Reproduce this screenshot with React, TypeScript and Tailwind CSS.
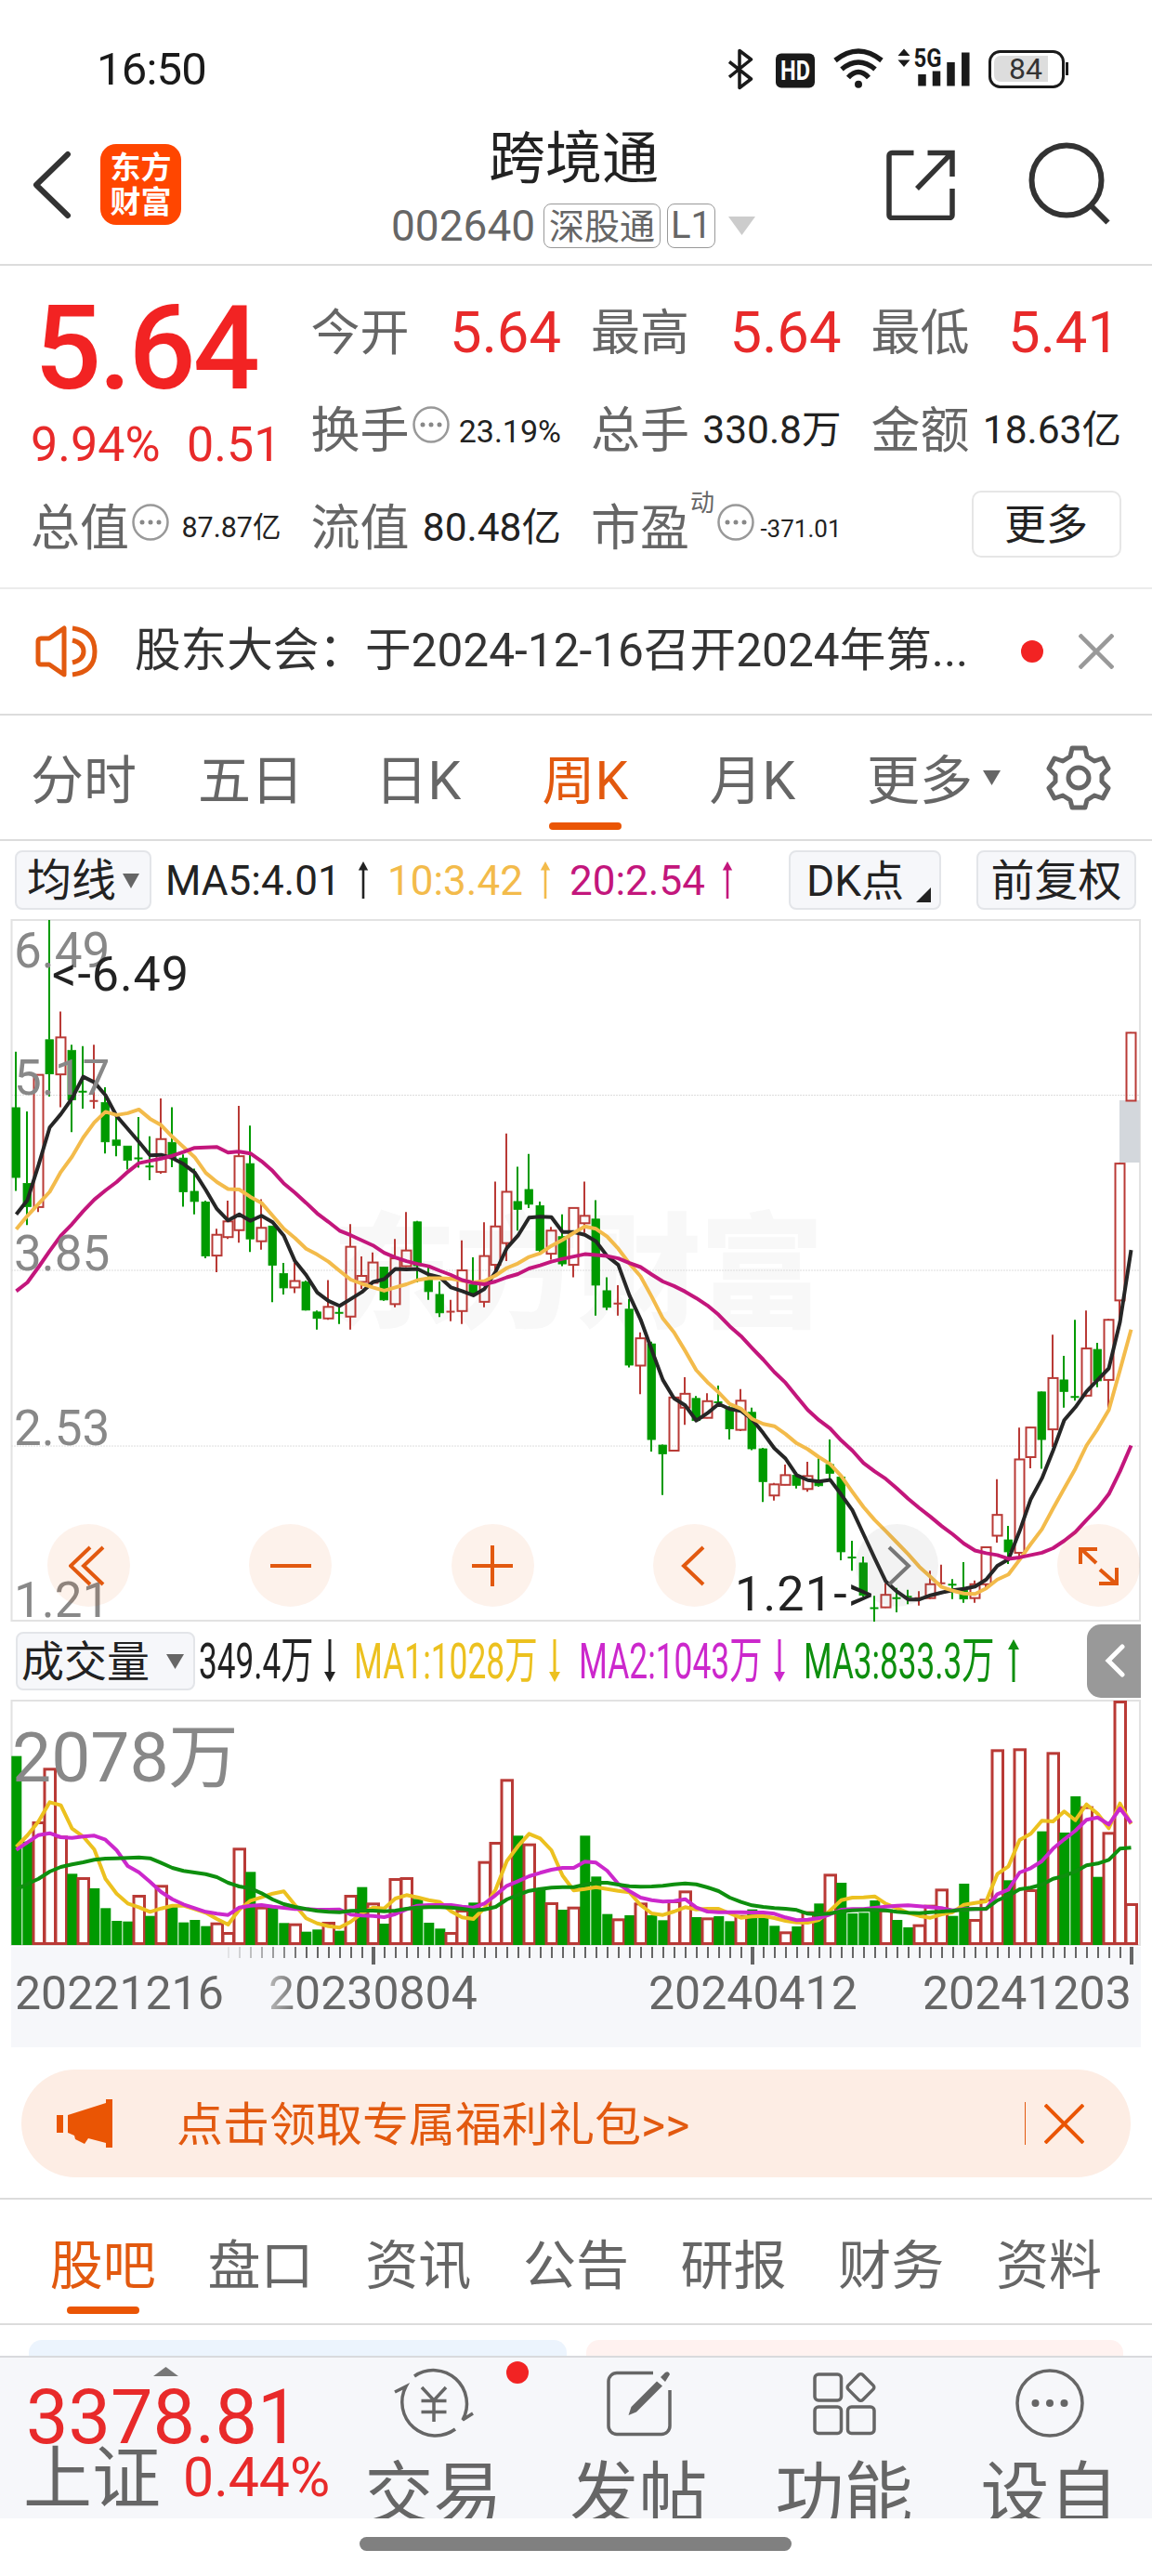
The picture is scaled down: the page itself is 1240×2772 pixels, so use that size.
import { FC, ReactNode } from "react";

type Candle = [up: 0 | 1, high: number, top: number, bottom: number, low: number];

const RED = "#b93a36";
const GREEN = "#009a00";
const STEP = 12;
const FIRST_X = 17;

// candle and price average values, in half pixel units
const candles: Candle[] = [
  [0, 305, 426, 577, 606], [0, 434, 590, 640, 680], [1, 355, 355, 641, 652], [0, 20, 279, 353, 402],
  [1, 218, 274, 354, 425], [0, 290, 302, 409, 479], [0, 293, 389, 394, 428], [1, 290, 409, 414, 428],
  [0, 382, 415, 500, 525], [0, 446, 496, 508, 531], [0, 509, 509, 540, 560], [0, 446, 533, 538, 556],
  [0, 488, 552, 555, 583], [1, 406, 494, 565, 569], [0, 425, 501, 535, 555], [0, 527, 535, 608, 640],
  [0, 558, 607, 629, 657], [0, 627, 630, 747, 752], [1, 688, 701, 746, 782], [1, 627, 672, 706, 710],
  [1, 422, 531, 691, 718], [0, 465, 547, 710, 738], [1, 624, 686, 715, 733], [0, 682, 682, 767, 847],
  [0, 762, 785, 816, 830], [1, 762, 801, 815, 827], [0, 800, 803, 864, 865], [0, 865, 868, 882, 906],
  [1, 799, 857, 882, 885], [0, 858, 868, 872, 894], [1, 678, 727, 878, 906], [1, 748, 790, 803, 818],
  [1, 739, 761, 805, 808], [0, 770, 771, 842, 844], [1, 710, 752, 851, 858], [1, 652, 735, 769, 771],
  [0, 671, 673, 768, 804], [0, 767, 796, 824, 842], [0, 802, 830, 870, 879], [1, 842, 864, 871, 888],
  [1, 713, 778, 866, 894], [0, 750, 809, 829, 833], [1, 674, 747, 846, 858], [1, 586, 683, 766, 785],
  [1, 482, 608, 719, 758], [0, 554, 629, 646, 692], [0, 526, 603, 635, 643], [0, 629, 638, 735, 738],
  [1, 684, 692, 742, 755], [0, 657, 705, 764, 769], [1, 642, 643, 766, 793], [1, 586, 660, 676, 697],
  [0, 626, 667, 810, 876], [0, 793, 822, 858, 864], [1, 810, 847, 853, 876], [0, 840, 862, 983, 988],
  [1, 912, 925, 984, 1046], [0, 932, 937, 1144, 1170], [0, 1155, 1156, 1175, 1264], [1, 1050, 1053, 1168, 1168],
  [1, 1009, 1045, 1075, 1112], [0, 1050, 1055, 1103, 1105], [1, 1044, 1061, 1097, 1098], [0, 1027, 1060, 1067, 1070],
  [0, 1072, 1075, 1121, 1144], [1, 1035, 1060, 1123, 1126], [0, 1075, 1085, 1164, 1167], [0, 1162, 1164, 1235, 1279],
  [1, 1238, 1241, 1265, 1276], [1, 1198, 1221, 1242, 1243], [0, 1215, 1221, 1243, 1250], [1, 1192, 1223, 1251, 1257],
  [0, 1183, 1236, 1244, 1246], [0, 1144, 1198, 1217, 1230], [0, 1220, 1225, 1387, 1405], [0, 1363, 1397, 1401, 1428],
  [0, 1397, 1411, 1481, 1484], [0, 1482, 1507, 1510, 1538], [1, 1455, 1480, 1507, 1508], [0, 1465, 1485, 1489, 1518],
  [0, 1469, 1482, 1486, 1500], [1, 1472, 1485, 1489, 1503], [1, 1428, 1457, 1487, 1489], [1, 1415, 1452, 1458, 1465],
  [0, 1446, 1456, 1460, 1489], [0, 1409, 1470, 1489, 1497], [1, 1449, 1457, 1487, 1497], [1, 1376, 1377, 1457, 1467],
  [1, 1230, 1307, 1352, 1367], [0, 1331, 1361, 1387, 1413], [1, 1118, 1187, 1389, 1397], [1, 1117, 1118, 1182, 1206],
  [0, 1040, 1041, 1144, 1207], [1, 917, 1011, 1122, 1160], [0, 963, 1015, 1040, 1075], [0, 885, 1050, 1054, 1060],
  [1, 865, 947, 1049, 1052], [0, 935, 949, 1017, 1031], [1, 883, 885, 1015, 1080], [1, 545, 547, 843, 888],
  [1, 263, 264, 411, 411],
];

const ma5 = [
  657, 626, 550, 469, 440, 406, 359, 371, 399, 444, 472, 500, 529, 528, 535, 548, 566, 604, 645, 670, 657, 671, 660, 674, 703,
  758, 788, 826, 844, 855, 840, 825, 803, 797, 775, 776, 775, 787, 793, 815, 823, 832, 818, 781, 730, 703, 664, 662, 663, 695,
  695, 701, 715, 747, 766, 832, 884, 950, 1015, 1055, 1070, 1103, 1087, 1067, 1078, 1082, 1100, 1130, 1163, 1185, 1221, 1232,
  1235, 1231, 1263, 1297, 1349, 1401, 1451, 1473, 1490, 1490, 1481, 1475, 1470, 1467, 1462, 1447, 1417, 1403, 1342, 1273, 1228,
  1168, 1102, 1074, 1040, 1015, 990, 890, 734,
];
const ma10 = [
  689, 660, 634, 608, 565, 532, 491, 458, 435, 442, 438, 430, 450, 464, 489, 511, 533, 567, 587, 602, 603, 619, 632, 660, 688,
  708, 731, 744, 759, 779, 798, 807, 815, 822, 815, 808, 799, 795, 795, 796, 800, 804, 801, 789, 773, 763, 749, 741, 725, 712,
  697, 683, 688, 705, 731, 763, 791, 835, 882, 912, 952, 994, 1020, 1042, 1067, 1077, 1099, 1110, 1115, 1132, 1152, 1165, 1182,
  1197, 1223, 1257, 1290, 1318, 1342, 1367, 1392, 1419, 1441, 1463, 1471, 1477, 1478, 1466, 1447, 1436, 1404, 1370, 1338, 1293,
  1250, 1207, 1157, 1121, 1080, 994, 906,
];
const ma20 = [
  823, 804, 771, 736, 703, 678, 650, 625, 605, 587, 565, 546, 541, 536, 530, 522, 513, 512, 511, 523, 521, 525, 542, 563, 590,
  610, 632, 655, 673, 692, 702, 713, 724, 740, 750, 758, 764, 769, 779, 788, 799, 805, 808, 802, 793, 786, 774, 767, 759, 753,
  748, 743, 745, 747, 752, 762, 771, 787, 802, 812, 824, 838, 854, 874, 899, 920, 946, 971, 998, 1021, 1051, 1080, 1102, 1120,
  1146, 1168, 1195, 1213, 1229, 1250, 1272, 1292, 1311, 1331, 1349, 1369, 1384, 1390, 1394, 1402, 1399, 1394, 1389, 1379, 1363,
  1344, 1318, 1293, 1262, 1213, 1157,
];

// volume values, in third pixel units
const volumes = [
  449, 725, 660, 487, 706, 829, 840, 876, 940, 981, 983, 897, 965, 865, 930, 986, 978, 998, 986, 1017, 745, 823, 935, 935, 988,
  989, 1016, 1009, 984, 1013, 897, 872, 922, 990, 843, 840, 910, 987, 1006, 1017, 945, 922, 788, 726, 523, 706, 731, 876, 921,
  945, 935, 706, 838, 959, 973, 963, 922, 963, 979, 915, 883, 969, 970, 966, 982, 962, 944, 965, 997, 1015, 999, 950, 925, 829,
  858, 957, 955, 915, 944, 978, 1002, 992, 929, 877, 965, 861, 975, 910, 427, 850, 424, 879, 692, 436, 696, 579, 611, 839, 694,
  270, 924,
];
const volumeRed = new Set([
  2, 3, 4, 6, 11, 13, 18, 19, 20, 22, 25, 28, 30, 32, 34, 35, 39, 40, 42, 43, 44, 46, 48, 50, 54, 56, 59, 60, 62, 65, 69, 71,
  73, 78, 81, 82, 83, 86, 87, 88, 90, 91, 93, 96, 98, 99, 100,
]);
const volMa1 = [
  742, 705, 660, 598, 608, 683, 709, 751, 845, 893, 925, 937, 952, 941, 932, 932, 943, 955, 975, 993, 945, 916, 905, 893, 886,
  930, 973, 989, 998, 1003, 984, 957, 938, 941, 909, 898, 905, 914, 920, 950, 970, 975, 940, 880, 788, 740, 700, 715, 753, 835,
  883, 878, 872, 878, 884, 889, 930, 957, 962, 951, 937, 944, 942, 942, 957, 971, 967, 965, 972, 981, 986, 987, 978, 948, 914,
  906, 905, 902, 926, 940, 955, 965, 971, 960, 953, 929, 923, 918, 830, 805, 720, 700, 658, 660, 628, 656, 605, 635, 682, 602,
  668,
];
const volMa2 = [
  752, 728, 704, 698, 711, 713, 709, 706, 719, 753, 804, 824, 855, 888, 911, 928, 940, 952, 958, 962, 938, 932, 930, 935, 939,
  943, 943, 945, 945, 944, 961, 964, 965, 969, 959, 944, 932, 930, 930, 930, 935, 938, 925, 898, 868, 853, 837, 826, 816, 810,
  810, 790, 793, 819, 862, 885, 906, 914, 919, 917, 911, 938, 951, 953, 953, 953, 954, 954, 958, 970, 979, 977, 972, 960, 945,
  943, 943, 939, 935, 932, 931, 934, 937, 940, 947, 943, 942, 943, 895, 880, 825, 811, 788, 748, 718, 690, 655, 647, 670, 618,
  665,
];
const volMa3 = [
  880, 862, 845, 822, 807, 799, 792, 784, 780, 779, 778, 776, 779, 794, 810, 820, 825, 830, 840, 858, 870, 876, 892, 912, 927,
  936, 943, 949, 952, 953, 949, 948, 948, 950, 948, 942, 938, 937, 937, 938, 942, 947, 944, 936, 912, 897, 884, 878, 874, 872,
  872, 864, 858, 858, 864, 869, 871, 870, 868, 863, 860, 863, 873, 885, 906, 920, 931, 936, 940, 942, 946, 958, 960, 957, 950,
  947, 946, 946, 947, 952, 955, 956, 953, 951, 949, 944, 943, 942, 915, 900, 879, 874, 864, 845, 836, 822, 802, 796, 784, 748,
  745,
];

const xAt = (i: number) => FIRST_X + i * STEP;
const priceY = (v: number) => (v - 20) * 0.4974 + 2;
const volumeY = (v: number) => (v - 270) / 3 + 2;
const points = (values: number[], y: (v: number) => number) =>
  values.map((v, i) => `${xAt(i) + 0.5},${y(v).toFixed(1)}`).join(" ");

const StatusBar: FC = () => (
  <div className="flex h-[136px] items-center pl-[104px] pt-[13px] text-[#1a1a1a]">
    <span className="w-[680px] text-[49px] leading-none tracking-[-0.800px]">16:50</span>
    <svg width="372" height="46" viewBox="784 52 372 46" fill="none">
      <path d="M785 66.500L808.500 85 796 94.500V54.500L808.500 64 785 83" stroke="#1a1a1a" strokeWidth="3.500" strokeLinejoin="round" />
      <rect x="835" y="57.500" width="42" height="37" rx="6" fill="#1a1a1a" />
      <text x="856" y="86" textAnchor="middle" fontSize="29" fontWeight="700" fill="#fff" textLength="32" lengthAdjust="spacingAndGlyphs">
        HD
      </text>
      <g stroke="#1a1a1a" strokeWidth="5.500">
        <path d="M899 65q25-20 50 0" />
        <path d="M906 74.500q18-15 36 0" />
        <path d="M913 83.500q11-12 22 0" />
      </g>
      <circle cx="924" cy="90.700" r="4" fill="#1a1a1a" />
      <path d="M966.500 60l6.500-7.500 6.500 7.500zM966.500 64.500l6.500 7.500 6.500-7.500z" fill="#1a1a1a" />
      <path
        d="M992.500 80v12.500M1008 76.500v16M1023.500 67v25.500M1039.300 56.500v36"
        stroke="#1a1a1a"
        strokeWidth="8.500"
      />
      <text
        x="983.500"
        y="72"
        fontSize="27"
        fontWeight="700"
        fill="#1a1a1a"
        stroke="#fff"
        strokeWidth="2"
        paintOrder="stroke"
        textLength="30"
        lengthAdjust="spacingAndGlyphs"
      >
        5G
      </text>
      <rect x="1065.500" y="55.500" width="79" height="38" rx="11" stroke="#1a1a1a" strokeWidth="3" />
      <path d="M1077 60h51v28h-51a7 7 0 0 1-7-7v-14a7 7 0 0 1 7-7z" fill="#ddd" />
      <text x="1104" y="85" textAnchor="middle" fontSize="32" fill="#333">
        84
      </text>
      <path d="M1148.500 67v14" stroke="#1a1a1a" strokeWidth="3" />
    </svg>
  </div>
);

const Header: FC = () => (
  <div className="flex h-[150px] border-b-2 border-[#dcdcdc]">
    <svg className="ml-[33px] mt-[26px]" width="46" height="74" viewBox="0 0 46 74" fill="none">
      <path d="M40 4L6 37l34 33" stroke="#333" strokeWidth="6" strokeLinecap="round" strokeLinejoin="round" />
    </svg>
    <div className="ml-[29px] mt-[19px] flex h-[87px] w-[87px] flex-col items-center justify-center rounded-[17px] bg-[#ff4600] text-[33px] leading-[37px] font-bold text-white">
      <span>东方</span>
      <span>财富</span>
    </div>
    <div className="ml-[226px] flex w-[397px] flex-col">
      <h1 className="ml-[105px] flex h-[70px] items-center text-[61px] leading-none text-[#222]">跨境通</h1>
      <div className="mt-[12px] flex h-[50px] items-center text-[#666]">
        <span className="w-[164px] text-[46px] leading-none">002640</span>
        <span className="flex h-[48px] w-[126px] items-center justify-center rounded-lg border-[1.5px] border-[#999] pt-[2px] text-[38px] leading-none">
          深股通
        </span>
        <span className="ml-[7px] flex h-[48px] w-[52px] items-center justify-center rounded-lg border-[1.5px] border-[#999] text-[40px] leading-none">
          L1
        </span>
        <svg className="ml-[14px]" width="29" height="20" viewBox="0 0 29 20">
          <path d="M0 0h29L14.500 20z" fill="#ccc" />
        </svg>
      </div>
    </div>
    <svg className="ml-[136px] mt-[25px]" width="75" height="76" viewBox="0 0 75 76" fill="none" stroke="#333" strokeWidth="5.500">
      <path d="M29.500 3.500H6a3 3 0 0 0-3 3v64a3 3 0 0 0 3 3h62a3 3 0 0 0 3-3V42" />
      <path d="M44.500 3.500H71V29M70 4L33 42" />
    </svg>
    <svg className="ml-[76px] mt-[16px]" width="92" height="92" viewBox="0 0 92 92" fill="none" stroke="#333">
      <circle cx="43" cy="42" r="37.500" strokeWidth="6" />
      <path d="M69 69l18.500 18.500" strokeWidth="6" />
    </svg>
  </div>
);

const Dots: FC = () => (
  <svg className="ml-[3px] shrink-0" width="40" height="40" viewBox="0 0 40 40">
    <circle cx="20" cy="20" r="18.500" fill="none" stroke="#999" strokeWidth="2.500" />
    <circle cx="11" cy="20" r="2.500" fill="#888" />
    <circle cx="20" cy="20" r="2.500" fill="#888" />
    <circle cx="29" cy="20" r="2.500" fill="#888" />
  </svg>
);

interface QuoteProps {
  label: string;
  valueClass: string;
  children: ReactNode;
  dots?: boolean;
  note?: string;
}

const Quote: FC<QuoteProps> = ({ label, valueClass, children, dots, note }) => (
  <div className="flex h-[105px] items-center pt-[4px] whitespace-nowrap">
    <span className="pt-[2px] text-[53px] leading-none text-[#666]">{label}</span>
    {note && <span className="mb-[56px] ml-[1px] w-[26px] text-[26px] leading-none text-[#666]">{note}</span>}
    {dots && (
      <span className="mb-[13px]">
        <Dots />
      </span>
    )}
    <span className={`ml-auto leading-none ${valueClass}`}>{children}</span>
  </div>
);

const Quotes: FC = () => (
  <div className="flex h-[348px] gap-[32px] border-b-2 border-[#ececec] px-[33px] pt-[18px]">
    <div className="w-[270px]">
      <div className="flex h-[138px] items-center pl-[4px] pt-[3px] text-[127px] leading-none font-medium tracking-[-3px] text-[#f22323]">
        5.64
      </div>
      <div className="flex h-[72px] items-center justify-between pt-[2px] text-[52px] leading-none text-[#e82a2a]">
        <span>9.94%</span>
        <span>0.51</span>
      </div>
      <Quote label="总值" dots valueClass="text-[30.5px] text-[#222]">
        87.87亿
      </Quote>
    </div>
    <div className="w-[270px]">
      <Quote label="今开" valueClass="text-[61.5px] text-[#e82a2a]">
        5.64
      </Quote>
      <Quote label="换手" dots valueClass="text-[34px] text-[#222]">
        23.19%
      </Quote>
      <Quote label="流值" valueClass="text-[42.5px] text-[#222]">
        80.48亿
      </Quote>
    </div>
    <div className="w-[270px]">
      <Quote label="最高" valueClass="text-[61.5px] text-[#e82a2a]">
        5.64
      </Quote>
      <Quote label="总手" valueClass="text-[42.5px] text-[#222]">
        330.8万
      </Quote>
      <Quote label="市盈" note="动" dots valueClass="text-[26px] text-[#222]">
        -371.01
      </Quote>
    </div>
    <div className="w-[270px]">
      <Quote label="最低" valueClass="pr-[2px] text-[61.5px] text-[#e82a2a]">
        5.41
      </Quote>
      <Quote label="金额" valueClass="text-[42.5px] text-[#222]">
        18.63亿
      </Quote>
      <button className="mt-[14px] ml-[108px] flex h-[72px] w-[161px] items-center justify-center rounded-[10px] border-2 border-[#e6e6e6] pt-[3px] text-[45px] leading-none text-[#222]">
        更多
      </button>
    </div>
  </div>
);

const Notice: FC = () => (
  <div className="flex h-[136px] items-center border-b-2 border-[#dcdcdc]">
    <svg className="ml-[38px]" width="68" height="58" viewBox="0 0 68 58" fill="none" stroke="#e2590f" strokeWidth="5" strokeLinejoin="round">
      <path d="M31 4v50L15 43H6a3 3 0 0 1-3-3V18a3 3 0 0 1 3-3h9z" />
      <path d="M40 17q12 3 12 12t-12 12" />
      <path d="M40 4q24 3 24 25T40 54" />
    </svg>
    <span className="ml-[39px] w-[954px] text-[49.6px] leading-none whitespace-nowrap text-[#333]">股东大会：于2024-12-16召开2024年第...</span>
    <span className="h-[24px] w-[24px] rounded-full bg-[#f22323]" />
    <svg className="ml-[38px]" width="38" height="38" viewBox="0 0 38 38" stroke="#999" strokeWidth="4.500">
      <path d="M1 1l36 36M37 1L1 37" />
    </svg>
  </div>
);

const periods = ["分时", "五日", "日K", "周K", "月K", "更多"];

const PeriodTabs: FC = () => (
  <div className="flex h-[135px] items-center border-b-2 border-[#dcdcdc]">
    {periods.map((name) => (
      <div
        key={name}
        className={`relative flex h-full w-[180px] items-center justify-center text-[57px] leading-none ${
          name === "周K" ? "text-[#e2590f]" : "text-[#666]"
        }`}
      >
        <span className="pt-[7px]">{name}</span>
        {name === "周K" && <span className="absolute bottom-[10px] h-[8px] w-[78px] rounded-full bg-[#ea5504]" />}
        {name === "更多" && (
          <svg className="absolute right-[3px]" width="19" height="16" viewBox="0 0 19 16">
            <path d="M0 0h19L9.500 16z" fill="#666" />
          </svg>
        )}
      </div>
    ))}
    <svg className="ml-[46px]" width="70" height="70" viewBox="0 0 70 70" fill="none" stroke="#666" strokeWidth="5" strokeLinejoin="round">
      <path d="M28 3h14l2 9 8 5 9-3 6 11-7 7v7l7 7-6 11-9-3-8 5-2 8H28l-2-8-8-5-9 3-6-11 7-7v-7l-7-7 6-11 9 3 8-5z" />
      <circle cx="35" cy="35" r="11" />
    </svg>
  </div>
);

interface ArrowProps {
  color: string;
  down?: boolean;
  className?: string;
}

const Arrow: FC<ArrowProps> = ({ color, down, className }) => (
  <svg className={`shrink-0 ${down ? "rotate-180" : ""} ${className ?? ""}`} width="12" height="46" viewBox="0 0 12 46">
    <path d="M6 0l6 11H0z" fill={color} />
    <path d="M6 10v36" stroke={color} strokeWidth="3" />
  </svg>
);

const PriceLegend: FC = () => (
  <div className="flex h-[83px] items-center pl-[16px] text-[44px] leading-none whitespace-nowrap">
    <button className="flex h-[64px] w-[147px] shrink-0 items-center rounded-lg border-2 border-[#e3e5e9] bg-[#f6f7fa] pt-[2px] pl-[11px] text-[48px] leading-none text-[#222]">
      均线
      <svg className="ml-[7px]" width="18" height="16" viewBox="0 0 18 16">
        <path d="M0 0h18L9 16z" fill="#666" />
      </svg>
    </button>
    <span className="ml-[15px] w-[207px] shrink-0 pt-[2px] text-[#222]">MA5:4.01</span>
    <Arrow color="#222" className="h-[40px]" />
    <span className="ml-[20px] w-[164px] shrink-0 pt-[2px] text-[#f3bb4b]">10:3.42</span>
    <Arrow color="#f3bb4b" className="h-[40px]" />
    <span className="ml-[20px] w-[164px] shrink-0 pt-[2px] text-[#c3167c]">20:2.54</span>
    <Arrow color="#c3167c" className="h-[40px]" />
    <button className="ml-[60px] flex h-[64px] w-[164px] shrink-0 items-end rounded-lg border-2 border-[#e3e5e9] bg-[#f6f7fa] pl-[17px] text-[46px] leading-[58px] text-[#222]">
      DK点
      <svg className="mb-[6px] ml-[13px]" width="16" height="16" viewBox="0 0 16 16">
        <path d="M16 0v16H0z" fill="#222" />
      </svg>
    </button>
    <button className="ml-[38px] flex h-[64px] w-[172px] shrink-0 items-center justify-center rounded-lg border-2 border-[#e3e5e9] bg-[#f6f7fa] pt-[2px] text-[47px] leading-none text-[#222]">
      前复权
    </button>
  </div>
);

const CandleShape: FC<{ candle: Candle; index: number }> = ({ candle, index }) => {
  const [up, high, top, bottom, low] = candle;
  const x = xAt(index);
  const y1 = priceY(top);
  const y2 = priceY(bottom);
  const color = up ? RED : GREEN;
  if (y2 - y1 < 3.5) {
    return (
      <path d={`M${x} ${priceY(high)}V${priceY(low)}M${x - 4.5} ${(y1 + y2) / 2}h9`} stroke={color} strokeWidth="2" />
    );
  }
  return (
    <g stroke={color} strokeWidth="2">
      <path d={`M${x} ${priceY(high)}V${y1}M${x} ${y2}V${priceY(low)}`} />
      <rect
        x={up ? x - 4.5 : x - 4}
        y={y1}
        width={up ? 10 : 8.5}
        height={y2 - y1}
        fill={up ? "none" : GREEN}
        strokeWidth={up ? 2 : 0.8}
      />
    </g>
  );
};

const Line: FC<{ values: number[]; y: (v: number) => number; color: string }> = ({ values, y, color }) => (
  <polyline points={points(values, y)} fill="none" stroke={color} strokeWidth="4" strokeLinejoin="round" />
);

const RoundButton: FC<{ gray?: boolean; children: ReactNode }> = ({ gray, children }) => (
  <button
    className={`flex h-[89px] w-[89px] items-center justify-center rounded-full ${gray ? "bg-[#666666]/8" : "bg-[#ea5504]/8"}`}
  >
    <svg width="44" height="44" viewBox="0 0 44 44" fill="none" stroke={gray ? "#777" : "#e2590f"} strokeWidth="4">
      {children}
    </svg>
  </button>
);

const priceLabels = [
  { text: "6.49", y: 53 },
  { text: "5.17", y: 190 },
  { text: "3.85", y: 379 },
  { text: "2.53", y: 567 },
  { text: "1.21", y: 752 },
];

const PriceChart: FC = () => (
  <div className="relative h-[758px]">
    <svg width="1240" height="758" viewBox="0 0 1240 758">
      <text x="622" y="430" textAnchor="middle" fontSize="134" fontWeight="900" fill="#f8f8f8" textLength="530">
        东方财富
      </text>
      <rect x="12.500" y="2" width="1214.500" height="754" fill="none" stroke="#e2e2e2" strokeWidth="2" />
      {[399, 778, 1158].map((v) => (
        <path key={v} d={`M12 ${priceY(v)}H1227`} stroke="#ddd" strokeWidth="1" strokeDasharray="2 1" />
      ))}
      <rect x="1205" y={priceY(410)} width="22" height="67" fill="#d3d7dc" />
      {candles.map((candle, i) => (
        <CandleShape key={i} candle={candle} index={i} />
      ))}
      <Line values={ma5} y={priceY} color="#262626" />
      <Line values={ma10} y={priceY} color="#f3bb4b" />
      <Line values={ma20} y={priceY} color="#c3167c" />
      {priceLabels.map((label) => (
        <text key={label.text} x="15" y={label.y} fontSize="53" fill="#888">
          {label.text}
        </text>
      ))}
      <text x="56" y="78" fontSize="52" fill="#222" textLength="147">
        &lt;-6.49
      </text>
      <text x="791" y="745" fontSize="52" fill="#222" textLength="149">
        1.21-&gt;
      </text>
    </svg>
    <div className="absolute bottom-[17px] left-[51px] flex gap-[128.400px]">
      <RoundButton>
        <path d="M23 2L2 22l21 20M37 2L16 22l21 20" />
      </RoundButton>
      <RoundButton>
        <path d="M0 22h44" />
      </RoundButton>
      <RoundButton>
        <path d="M0 22h44M22 0v44" />
      </RoundButton>
      <RoundButton>
        <path d="M31 2L10 22l21 20" />
      </RoundButton>
      <RoundButton gray>
        <path d="M14 2l21 20-21 20" />
      </RoundButton>
      <RoundButton>
        <path d="M3 20V4h18M4 4l16 15M42 24v17H23M41 41L24 26" />
      </RoundButton>
    </div>
  </div>
);

const VolumeLegend: FC = () => (
  <div className="flex h-[82px] items-center pl-[17px] text-[54px] leading-none whitespace-nowrap">
    <button className="flex h-[63px] w-[193px] shrink-0 items-center rounded-lg border-2 border-[#e3e5e9] bg-[#f6f7fa] pt-[2px] pl-[4px] text-[46px] leading-none text-[#222]">
      成交量
      <svg className="ml-[18px]" width="19" height="16" viewBox="0 0 19 16">
        <path d="M0 0h19L9.500 16z" fill="#666" />
      </svg>
    </button>
    <span className="ml-[4px] w-[135px] pt-[2px]">
      <span className="inline-block origin-left scale-x-[0.650] text-[#222]">349.4万</span>
    </span>
    <Arrow color="#222" down />
    <span className="ml-[20px] w-[210px] pt-[2px]">
      <span className="inline-block origin-left scale-x-[0.655] text-[#ecc11f]">MA1:1028万</span>
    </span>
    <Arrow color="#ecc11f" down />
    <span className="ml-[20px] w-[210px] pt-[2px]">
      <span className="inline-block origin-left scale-x-[0.655] text-[#cc28cc]">MA2:1043万</span>
    </span>
    <Arrow color="#cc28cc" down />
    <span className="ml-[20px] w-[220px] pt-[2px]">
      <span className="inline-block origin-left scale-x-[0.650] text-[#0e8f0e]">MA3:833.3万</span>
    </span>
    <Arrow color="#0e8f0e" />
    <button className="ml-[73px] flex h-[79px] w-[58px] items-center justify-center rounded-l-[15px] bg-[#999]">
      <svg className="ml-[2px]" width="24" height="38" viewBox="0 0 24 38" fill="none">
        <path d="M20 4L5 19l15 15" stroke="#fff" strokeWidth="5" strokeLinecap="round" />
      </svg>
    </button>
  </div>
);

const VolumeChart: FC = () => (
  <svg className="block" width="1240" height="267" viewBox="0 0 1240 267">
    <rect x="12.500" y="2" width="1214.500" height="263" fill="none" stroke="#e2e2e2" strokeWidth="2" />
    {volumes.map((v, i) => {
      const x = xAt(i) + 0.5;
      const y = volumeY(v);
      return volumeRed.has(i) ? (
        <rect key={i} x={x - 5.5} y={y + 1.5} width="11.500" height={262 - y} fill="#fff" stroke={RED} strokeWidth="3" />
      ) : (
        <rect key={i} x={x - 5.2} y={y} width="11" height={265 - y} fill={GREEN} />
      );
    })}
    <Line values={volMa1} y={volumeY} color="#ecc11f" />
    <Line values={volMa2} y={volumeY} color="#cc28cc" />
    <Line values={volMa3} y={volumeY} color="#0e8f0e" />
    <text x="13" y="89" fontSize="75" fill="#888">
      2078万
    </text>
  </svg>
);

const DateAxis: FC = () => (
  <div className="ml-[12px] h-[108px] w-[1216px] bg-[#f6f7fa]">
    <svg className="block" width="1216" height="19" viewBox="12 0 1216 19">
      {volumes.map((_, i) => {
        if (i < 19) return null;
        const major = i === 32 || i === 66 || i === 100;
        return (
          <path
            key={i}
            d={`M${xAt(i) + 1} 0v${major ? 19 : 12}`}
            stroke="#666"
            strokeWidth={major ? 4 : 2}
            opacity={Math.min(1, (i - 18) / 8)}
          />
        );
      })}
    </svg>
    <div className="mt-[6px] flex text-[50px] leading-none text-[#666]">
      <span className="ml-[4px] w-[273px]">20221216</span>
      <span className="w-[409px]">
        <span className="bg-linear-to-r from-[#bbb] to-[#666] to-15% bg-clip-text text-transparent">20230804</span>
      </span>
      <span className="w-[295px]">20240412</span>
      <span>20241203</span>
    </div>
  </div>
);

const GiftBanner: FC = () => (
  <div className="mx-[23px] mt-[24px] flex h-[116px] items-center rounded-full bg-[#fdede4] text-[#e2590f]">
    <svg className="ml-[38px]" width="60" height="52" viewBox="0 0 60 52" fill="#ea5504">
      <path d="M0 17h7v19H0zM12 17L53 4V0h7v52h-7v-5l-19-5-4 6-10-5-1-4-7-3z" />
    </svg>
    <span className="ml-[69px] w-[913px] pt-[3px] text-[50px] leading-none">点击领取专属福利礼包&gt;&gt;</span>
    <span className="h-[46px] w-px bg-[#e2590f]" />
    <svg className="ml-[20px]" width="43" height="43" viewBox="0 0 43 43" stroke="#ea5504" strokeWidth="4">
      <path d="M1 1l41 41M42 1L1 42" />
    </svg>
  </div>
);

const sections = ["股吧", "盘口", "资讯", "公告", "研报", "财务", "资料"];

const SectionTabs: FC = () => (
  <div className="mt-[22px] flex h-[137px] border-y-2 border-[#dcdcdc] px-[26px]">
    {sections.map((name, i) => (
      <div
        key={name}
        className={`relative flex w-[169.700px] items-center justify-center pt-[9px] text-[57px] leading-none ${
          i === 0 ? "text-[#e2590f]" : "text-[#666]"
        }`}
      >
        {name}
        {i === 0 && <span className="absolute bottom-[10px] h-[8px] w-[78px] rounded-full bg-[#ea5504]" />}
      </div>
    ))}
  </div>
);

const NavItem: FC<{ label: string; children: ReactNode; badge?: boolean }> = ({ label, children, badge }) => (
  <div className="relative flex w-[221px] flex-col items-center pt-[10px]">
    <svg className="shrink-0" width="88" height="78" viewBox="0 0 88 78" fill="none" stroke="#666" strokeWidth="3.500">
      {children}
    </svg>
    <span className="mt-[23px] text-[74px] leading-none whitespace-nowrap text-[#666]">{label}</span>
    {badge && <span className="absolute top-[4px] left-[189px] h-[24px] w-[24px] rounded-full bg-[#f22323]" />}
  </div>
);

const BottomBar: FC = () => (
  <div className="flex h-[175px] overflow-hidden border-t-2 border-[#d9dadd] bg-[#f6f7fa]">
    <div className="w-[356px]">
      <svg className="mt-[10px] ml-[165px] block" width="27" height="10" viewBox="0 0 27 10">
        <path d="M0 10L13.500 0 27 10z" fill="#777" />
      </svg>
      <div className="mt-[5px] ml-[28px] text-[81px] leading-[80px] text-[#e82a2a]">3378.81</div>
      <div className="-mt-[11px] flex items-center pl-[25px] leading-none">
        <span className="text-[74px] leading-none text-[#666]">上证</span>
        <span className="mb-[5px] ml-[24px] text-[59px] leading-none text-[#e82a2a]">0.44%</span>
      </div>
    </div>
    <NavItem label="交易" badge>
      <path d="M23 10A36 36 0 0 1 75 57l11-7M67 67A36 36 0 0 1 14 21L2 27" />
      <path d="M31 22l13 14 13-14M44 35v24M30.500 36.500h27M30.500 48.500h27" />
    </NavItem>
    <NavItem label="发帖">
      <path d="M59 6.500H20a9 9 0 0 0-9 9v48a9 9 0 0 0 9 9h48a9 9 0 0 0 9-9V25" />
      <path d="M63 15.500l6 5-28 28-8.500 3.500 3-9zM67 11l5-5q4-2 5 2l-5 8z" fill="#666" stroke="none" />
    </NavItem>
    <NavItem label="功能">
      <rect x="12" y="8" width="28.500" height="28" rx="4" />
      <rect x="12" y="43" width="28.500" height="28.500" rx="4" />
      <rect x="47.500" y="43" width="28.500" height="28.500" rx="4" />
      <rect x="50.500" y="11" width="22" height="22" rx="3" transform="rotate(45 61.500 22)" />
    </NavItem>
    <NavItem label="设自">
      <circle cx="44" cy="39" r="35" />
      <g fill="#666" stroke="none">
        <circle cx="28.500" cy="39" r="4" />
        <circle cx="44" cy="39" r="4" />
        <circle cx="59.500" cy="39" r="4" />
      </g>
    </NavItem>
  </div>
);

const App: FC = () => {
  return (
    <div className="flex h-[2772px] w-[1240px] flex-col overflow-hidden bg-white font-['Roboto','Noto_Sans_CJK_SC',sans-serif]">
      <StatusBar />
      <Header />
      <Quotes />
      <Notice />
      <PeriodTabs />
      <PriceLegend />
      <PriceChart />
      <VolumeLegend />
      <VolumeChart />
      <DateAxis />
      <GiftBanner />
      <SectionTabs />
      <div className="flex h-[33px] gap-[21px] overflow-hidden px-[31px] pt-[16px]">
        <div className="h-[40px] w-[579px] rounded-[14px] bg-[#ecf4fd]" />
        <div className="h-[40px] w-[578px] rounded-[14px] bg-[#fff2f0]" />
      </div>
      <BottomBar />
      <div className="mt-[20px] ml-[387px] h-[15px] w-[465px] rounded-full bg-[#808080]" />
    </div>
  );
};

export default App;
